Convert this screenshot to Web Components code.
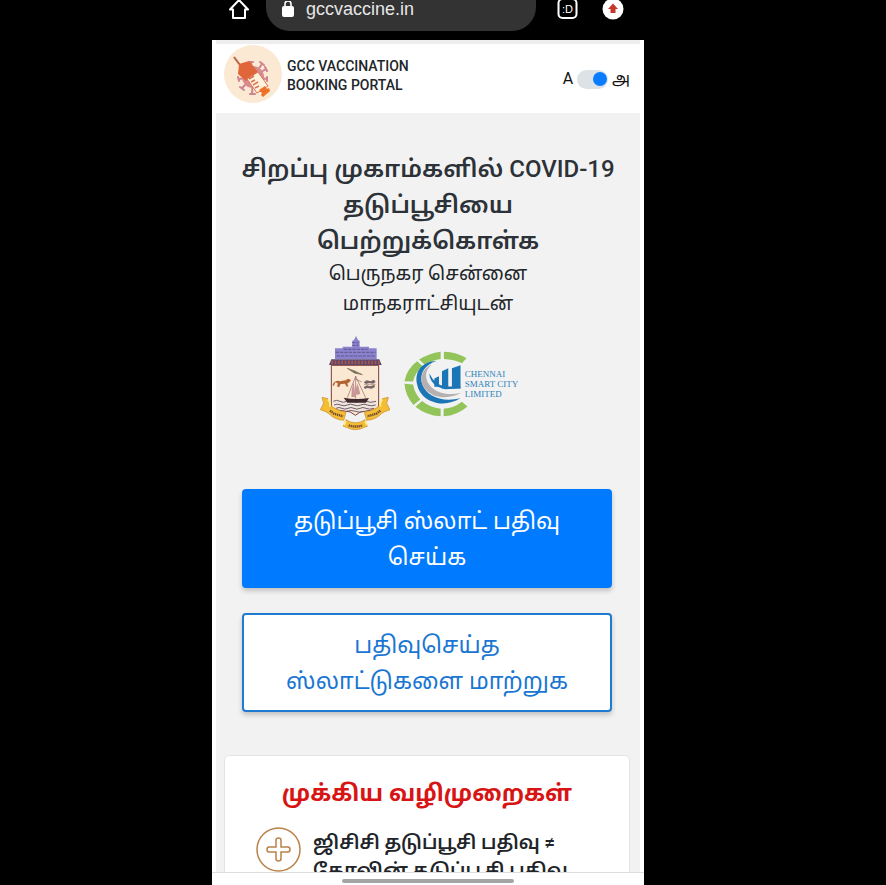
<!DOCTYPE html>
<html lang="ta">
<head>
<meta charset="utf-8">
<meta name="viewport" content="width=device-width, initial-scale=1">
<title>GCC Vaccination Booking Portal</title>
<style>
html,body{height:100%;margin:0;background:#000}
body{font-family:Roboto,"Noto Sans Tamil","Noto Sans",sans-serif;color:#212529;overflow:hidden}
.latin{font-weight:500}
</style>
</head>
<body>
<phone-screen>
  <browser-bar slot="top" url="gccvaccine.in"></browser-bar>
  <portal-header>GCC VACCINATION<br>BOOKING PORTAL</portal-header>
  <portal-hero>
    <span slot="title">சிறப்பு முகாம்களில் <span class="latin">COVID-19</span><br>தடுப்பூசியை<br>பெற்றுக்கொள்க</span>
    <span slot="subtitle">பெருநகர சென்னை<br>மாநகராட்சியுடன்</span>
  </portal-hero>
  <action-button primary>தடுப்பூசி ஸ்லாட் பதிவு<br>செய்க</action-button>
  <action-button>பதிவுசெய்த<br>ஸ்லாட்டுகளை மாற்றுக</action-button>
  <guide-card>
    <span slot="title">முக்கிய வழிமுறைகள்</span>
    ஜிசிசி தடுப்பூசி பதிவு ≠<br>கோவின் தடுப்பூசி பதிவு
  </guide-card>
</phone-screen>
<script>
const define = (name, html, setup) => customElements.define(name, class extends HTMLElement {
  constructor() {
    super();
    const t = document.createElement('template');
    t.innerHTML = html;
    this.attachShadow({mode: 'open'}).append(t.content.cloneNode(true));
  }
  connectedCallback() { if (setup) setup(this, this.shadowRoot); }
});

define('phone-screen', `
<style>
:host{display:grid;grid-template-columns:212fr 432fr 242fr;height:100vh}
.phone{grid-column:2;display:flex;flex-direction:column;min-width:0;height:100vh;overflow:hidden;background:#fff}
main{flex:1;min-height:0;overflow:hidden;margin:0 4px;background:#f2f2f2;border-top:4px solid #eee;box-sizing:border-box}
footer{flex:none;height:13px;display:flex;justify-content:center;align-items:center;padding-top:3px;border-top:1px solid #ddd;box-sizing:border-box;background:#fff}
footer i{width:40%;height:4px;border-radius:2px;background:#a4a4a4}
</style>
<div class="phone"><slot name="top"></slot><main><slot></slot></main><footer><i></i></footer></div>`);

define('browser-bar', `
<style>
:host{display:flex;flex:none;align-items:flex-start;justify-content:space-between;height:40px;padding:0 20px 0 16px;box-sizing:border-box;background:#000;color:#e8e8e8}
button{all:unset;display:block;height:20px}
svg{display:block}
label{display:flex;align-items:center;gap:12px;flex:1;height:31px;margin:0 20px 0 16px;padding:0 16px 14px;box-sizing:border-box;border-radius:0 0 24px 24px;background:#333}
input{all:unset;flex:1;min-width:0;font:18px/20px "Liberation Sans",sans-serif;color:#e6e6e6}
.r{display:flex;gap:24px}
</style>
<button aria-label="Home"><svg width="22" height="20" viewBox="0 0 22 20" fill="none" stroke="#fff" stroke-width="2"><path d="M2 9.500 11 0l9 9.500h-3V18H5V9.500z" stroke-linejoin="round"/></svg></button>
<label><svg width="12" height="16" viewBox="0 0 12 16"><rect y="5" width="12" height="11" rx="2" fill="#fff"/><path d="M3 6V3a3 3 0 0 1 6 0v3" fill="none" stroke="#fff" stroke-width="1.600"/></svg><input aria-label="Address" size="10"></label>
<div class="r">
<button aria-label="Tabs"><svg width="22" height="20" viewBox="0 0 22 20"><rect x="2.500" y="-1" width="18" height="19" rx="4" fill="none" stroke="#fff" stroke-width="2"/><text x="11.500" y="13" text-anchor="middle" font-family="Liberation Sans" font-size="11" fill="#fff">:D</text></svg></button>
<button aria-label="Update"><svg width="22" height="20" viewBox="0 0 22 20"><circle cx="11" cy="9" r="10.500" fill="#fff"/><path d="m11 3.500 5 5.500h-2.500v4h-5V9H6z" fill="#c5362b"/></svg></button>
</div>`, (el, root) => { root.querySelector('input').value = el.getAttribute('url'); });

define('portal-header', `
<style>
:host{display:flex;align-items:flex-start;justify-content:space-between;height:69px;padding:1px 10px 0 8px;box-sizing:border-box;background:#fff}
.brand{display:flex;gap:5px}
svg{display:block;flex:none}
h1{margin:12px 0 0;font-size:14px;line-height:19px;font-weight:500}
label{display:flex;align-items:center;gap:4px;margin-top:22px;font-size:16px;line-height:24px;color:#111}
input{appearance:none;margin:0;width:31px;height:19px;border-radius:10px;background:#dce2e6;display:flex;justify-content:flex-end;align-items:center;padding:0 1px;box-sizing:border-box}
input::before{content:"";width:14px;height:14px;border-radius:50%;background:#0a7cff}
input:not(:checked){justify-content:flex-start}
</style>
<div class="brand"><svg width="58" height="58" viewBox="0 0 58 58">
<circle cx="29" cy="29" r="29" fill="#fbe9d3"/>
<g fill="none" stroke="#cf8290" stroke-width="2" stroke-linecap="round"><path d="M29 32 27 18M29 32l9-13M29 32l13-8M29 32l14 2M29 32 15 34M29 32 18 43M29 32l-1 17M29 32l8 14M25 17h4M36 17l4 3M41 22l2 4M43 32v4M14 32l1 4M16 42l4 3M26 49h5"/></g>
<circle cx="29" cy="32" r="11" fill="#d68c91"/>
<path d="m10 12 9 12" stroke="#b66343" stroke-width="2"/>
<path d="m15 19 10-3 9 11-12 9-8-7z" fill="#e1653a"/>
<path d="m23 34 11-7 10 14-11 7z" fill="#fff1db" stroke="#db7452"/>
<path d="m25 34 5-3m-3 6 4-2m-2 5 5-3m-3 6 4-2" stroke="#db7452" stroke-width="1.500"/>
<path d="m35 45 6-4 2 3 2-1 1 3-7 6-2-2 1-2z" fill="#ef7128"/></svg>
<h1><slot></slot></h1></div>
<label><span>A</span><input type="checkbox" role="switch" checked aria-label="தமிழ்"><span>அ</span></label>`);

define('smart-city-logo', `
<style>
:host{display:flex;align-items:center;font:9px/10px "Liberation Serif",serif;color:#2f83ba;text-align:left;white-space:nowrap}
svg{display:block;overflow:visible}
</style>
<svg width="62" height="68" viewBox="25 45 186 205">
<g fill="#92c45a"><path d="M148 50Q187 51 216 70L202 85Q178 73 148 72z"/><path d="M138 50Q103 54 73 74L91 90Q113 75 138 72z"/><path d="M67 79Q36 102 29 139L55 140Q61 112 84 94z"/><path d="M29 147Q32 184 56 211L77 194Q59 174 55 149z"/><path d="M62 216Q94 242 138 245V222Q106 219 82 199z"/><path d="M147 245Q188 242 219 215L202 201Q178 220 147 222z"/></g>
<path d="M126 78C79 79 59 113 67 148c9 51 77 77 131 42-52 15-103-4-116-43-9-31 8-58 44-69z" fill="#1c75b5"/>
<path d="M112 88c-33 15-41 50-20 75 25 30 74 30 108 12-41 8-78 0-96-25-16-22-12-45 8-62z" fill="#b5b1b1"/>
<path d="M104 116c0 22 18 43 48 47l46-2v-6h-44q-32-2-50-39z" fill="#1c75b5"/>
<path d="m119 131 14-7v32h-14zm23-22 19-9v61h-19zm30-9 26-9v69h-26z" fill="#1c75b5"/></svg>
<span>CHENNAI<br>SMART CITY<br>LIMITED</span>`);

define('corporation-crest', `
<style>:host{display:block}svg{display:block}</style>
<svg width="70" height="100" viewBox="30 25 210 300" role="img" aria-label="Greater Chennai Corporation">
<path d="M75 100V68h23v-5h29V45l5-2 6-12 6 12 5 2v18h28v5h23v32z" fill="#8b82cc"/>
<path d="M77 80h120M80 91h115M101 71h72M126 51h20M126 59h20" stroke="#605798" stroke-width="3" stroke-dasharray="10 3"/>
<path d="M64 101h144l7 17H57z" fill="#584674"/><path d="M64 110h145" stroke="#a85742" stroke-width="11" stroke-dasharray="5 5"/>
<path d="M64 119h142v119q0 11-14 14l-41 7-15 10-15-10-43-7q-14-3-14-14z" fill="#fae8d3" stroke="#7e4034" stroke-width="3"/>
<path d="M70 224h130v18q-2 7-14 9l-37 5-13 8-13-8-39-5q-14-2-14-9z" fill="#eee5df"/>
<path d="M70 227q10-6 20 0t20 0 20 0 20 0 20 0 28 0M72 238q10-5 20 0t20 0 20 0 20 0 20 0 25 0M78 248q9-5 18 0t18 0 18 0 18 0 18 0 24 0M109 257q15-5 28 0t24 0" stroke="#755d64" stroke-width="3" fill="none"/>
<path d="M101 216q36 8 76 1l-9 14h-56z" fill="#40292c"/>
<path d="M137 219V151m-25 65 25-64 30 64M137 160l18 9" stroke="#92636a" stroke-width="2" fill="none"/><path d="M131 168q-8 23-7 46h13zM143 174q-9 17-4 34l12-3z" fill="#c99695"/>
<path d="m112 128 22 8 23 11-24-5z" fill="#756d59" stroke="#756d59" stroke-width="2"/>
<path d="M72 170q10-8 18-3l17-3 7-5 9 4-5 7-6 3 3 10-6-1-4-8-13 1-5 10-5-2 1-10-7-3-4 10-5-1z" fill="#b36332"/>
<path d="m161 170 9-6 12 3 10-5 5 7-8 5-11-2-10 3zm0 14 10-5 9 3 13-5 2 7-10 5-13-2-7 3z" fill="#766766"/><path d="M162 176h35" stroke="#b89c8c" stroke-width="3"/>
<g fill="#f3bd36" stroke="#c88a22" stroke-width="2"><path d="m31 252 10-19-5-18 18 4q4 20 18 28 15 9 36 13l-7 24q-28-2-44-20l-10-6z"/><path d="m240 252-10-19 5-18-18 4q-4 20-18 28-15 9-36 13l7 24q28-2 44-20l10-6z"/><path d="m108 282 13 7q16 5 31 0l13-7 7 20-9 3q-26 14-54 0l-9-3z"/></g>
<path d="M54 221q8 9 6 22M217 221q-8 9-6 22M107 285l-4 14M166 285l5 14" stroke="#fff08d" stroke-width="5" fill="none"/>
<path d="m60 255 12 9 27 8m112-17-12 9-27 8M116 299q20 7 42 0" fill="none" stroke="#6b4831" stroke-width="7" stroke-dasharray="4 2"/>
</svg>`);

define('portal-hero', `
<style>
:host{display:flex;flex-direction:column;align-items:center;padding:38px 8px 0;text-align:center}
h2{margin:0;font-size:24px;line-height:36px;font-weight:600;color:#2c3238;white-space:nowrap}
p{margin:0;font-size:19px;line-height:30px;white-space:nowrap}
.logos{display:flex;align-items:center;gap:13px;margin-top:15px;height:100px;padding-right:18px}
</style>
<h2><slot name="title"></slot></h2><p><slot name="subtitle"></slot></p>
<div class="logos"><corporation-crest></corporation-crest><smart-city-logo></smart-city-logo></div>`);

define('action-button', `
<style>
:host{display:block;padding:0 28px 0 26px;margin-top:25px}
:host([primary]){margin-top:55px}
button{display:block;width:100%;padding:13px 0 10px;border:2px solid #1f7bd0;border-radius:4px;background:#fff;color:#1976d2;font:inherit;font-size:23px;line-height:36px;box-shadow:0 3px 5px rgba(0,0,0,.2)}
:host([primary]) button{background:#007bff;border-color:#007bff;color:#fff}
</style>
<button type="button"><slot></slot></button>`);

define('guide-card', `
<style>
:host{display:block;margin:43px 10px 0 8px;padding:20px 0 30px;border:1px solid #e4e4e4;border-radius:5px;background:#fff}
h2{margin:0;text-align:center;font-size:23px;line-height:36px;font-weight:700;color:#d71515}
.row{display:flex;gap:12px;padding:15px 0 0 31px}
svg{flex:none;display:block}
p{margin:2px 0 0;font-size:19px;line-height:28px;font-weight:600;white-space:nowrap}
</style>
<h2><slot name="title"></slot></h2>
<div class="row"><svg width="45" height="45" viewBox="0 0 45 45" fill="none" stroke="#b98248" stroke-width="1.500"><circle cx="22.500" cy="22.500" r="21.500"/><path d="M20 13q0-2 2.500-2t2.500 2v7h7q2 0 2 2.500T32 25h-7v7q0 2-2.500 2T20 32v-7h-7q-2 0-2-2.500t2-2.500h7z"/></svg><p><slot></slot></p></div>`);
</script>
</body>
</html>
